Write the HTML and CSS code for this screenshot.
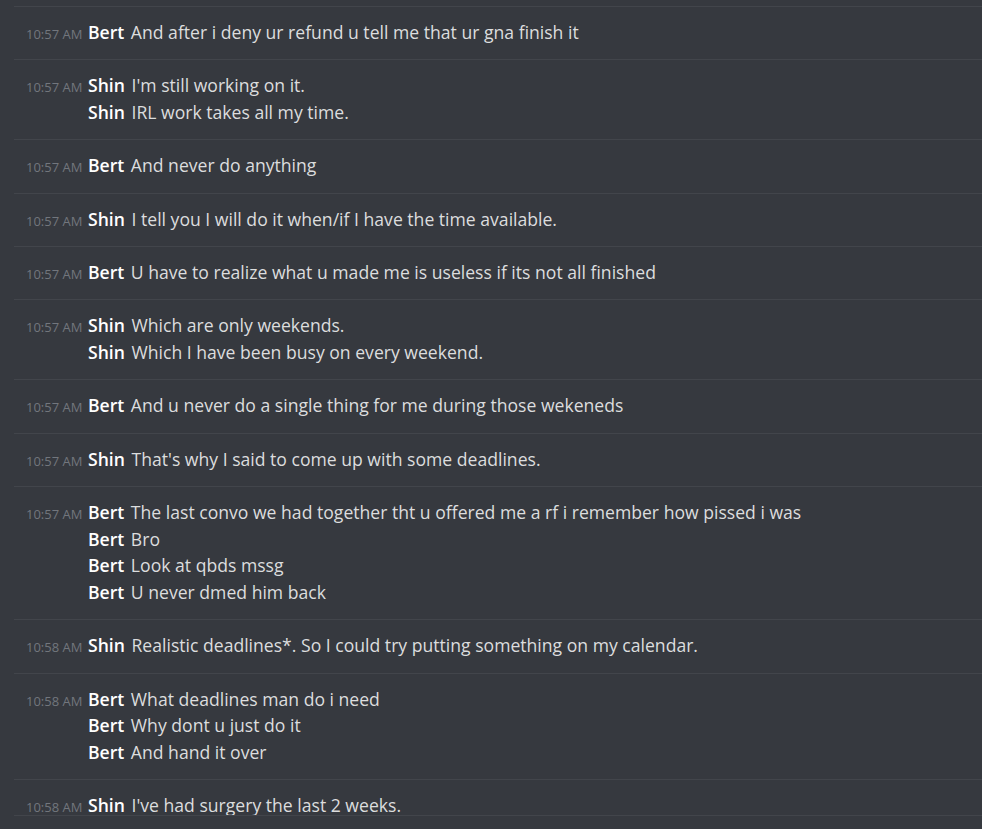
FILE: index.html
```html
<!DOCTYPE html>
<html lang="en">
<head>
<meta charset="utf-8">
<title>Chat</title>
<link rel="stylesheet" href="styles.css">
</head>
<body>
<div class="chat">
  <div class="group">
    <span class="time">10:57 AM</span>
    <div class="lines">
      <div class="line"><span class="user">Bert</span> And after i deny ur refund u tell me that ur gna finish it</div>
    </div>
  </div>
  <div class="group">
    <span class="time">10:57 AM</span>
    <div class="lines">
      <div class="line"><span class="user">Shin</span> I'm still working on it.</div>
      <div class="line"><span class="user">Shin</span> IRL work takes all my time.</div>
    </div>
  </div>
  <div class="group">
    <span class="time">10:57 AM</span>
    <div class="lines">
      <div class="line"><span class="user">Bert</span> And never do anything</div>
    </div>
  </div>
  <div class="group">
    <span class="time">10:57 AM</span>
    <div class="lines">
      <div class="line"><span class="user">Shin</span> I tell you I will do it when/if I have the time available.</div>
    </div>
  </div>
  <div class="group">
    <span class="time">10:57 AM</span>
    <div class="lines">
      <div class="line"><span class="user">Bert</span> U have to realize what u made me is useless if its not all finished</div>
    </div>
  </div>
  <div class="group">
    <span class="time">10:57 AM</span>
    <div class="lines">
      <div class="line"><span class="user">Shin</span> Which are only weekends.</div>
      <div class="line"><span class="user">Shin</span> Which I have been busy on every weekend.</div>
    </div>
  </div>
  <div class="group">
    <span class="time">10:57 AM</span>
    <div class="lines">
      <div class="line"><span class="user">Bert</span> And u never do a single thing for me during those wekeneds</div>
    </div>
  </div>
  <div class="group">
    <span class="time">10:57 AM</span>
    <div class="lines">
      <div class="line"><span class="user">Shin</span> That's why I said to come up with some deadlines.</div>
    </div>
  </div>
  <div class="group">
    <span class="time">10:57 AM</span>
    <div class="lines">
      <div class="line"><span class="user">Bert</span> The last convo we had together tht u offered me a rf i remember how pissed i was</div>
      <div class="line"><span class="user">Bert</span> Bro</div>
      <div class="line"><span class="user">Bert</span> Look at qbds mssg</div>
      <div class="line"><span class="user">Bert</span> U never dmed him back</div>
    </div>
  </div>
  <div class="group">
    <span class="time">10:58 AM</span>
    <div class="lines">
      <div class="line"><span class="user">Shin</span> Realistic deadlines*. So I could try putting something on my calendar.</div>
    </div>
  </div>
  <div class="group">
    <span class="time">10:58 AM</span>
    <div class="lines">
      <div class="line"><span class="user">Bert</span> What deadlines man do i need</div>
      <div class="line"><span class="user">Bert</span> Why dont u just do it</div>
      <div class="line"><span class="user">Bert</span> And hand it over</div>
    </div>
  </div>
  <div class="group">
    <span class="time">10:58 AM</span>
    <div class="lines">
      <div class="line"><span class="user">Shin</span> I've had surgery the last 2 weeks.</div>
    </div>
  </div>
</div>
</body>
</html>
```
FILE: styles.css
```css
html, body {
  margin: 0;
  padding: 0;
  background: #36393f;
  height: 100%;
}

body {
  font-family: "Open Sans", "Noto Sans", sans-serif;
  overflow: hidden;
}

.chat {
  height: 816px;
  box-sizing: border-box;
  padding-top: 6px;
  margin-left: 14px;
  overflow: hidden;
  border-bottom: 1px solid #42454b;
}

.group {
  display: flex;
  align-items: baseline;
  border-top: 1px solid #42454b;
  padding: 12px 0 13.667px 12px;
}

.time {
  flex: 0 0 62px;
  font-size: 13px;
  color: #72767d;
  white-space: nowrap;
}

.lines {
  display: flex;
  flex-direction: column;
}

.line {
  font-size: 17.6px;
  line-height: 26.667px;
  color: #dcddde;
  white-space: nowrap;
}

.user {
  font-weight: 600;
  color: #ffffff;
  margin-right: 2px;
}
```
